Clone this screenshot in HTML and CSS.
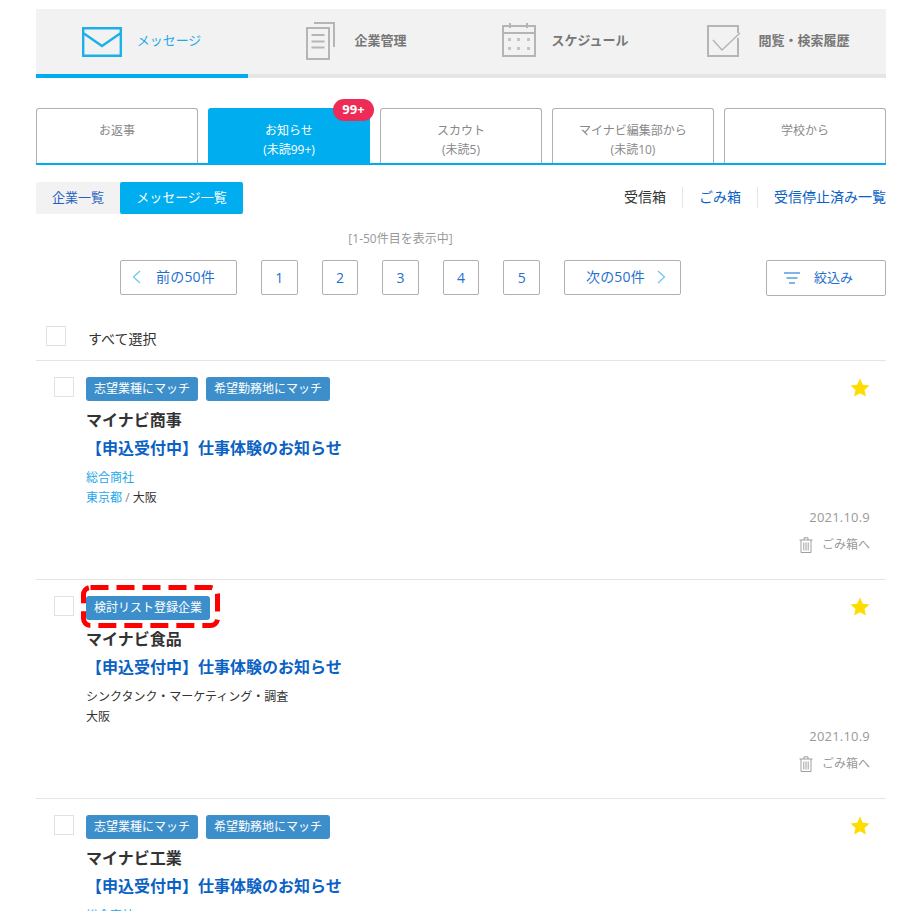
FILE: index.html
```html
<!DOCTYPE html>
<html lang="ja">
<head>
    <meta charset="UTF-8">
    <title>メッセージ</title>
    <link rel="stylesheet" href="styles.css">
</head>
<body>
<svg class="defs" width="0" height="0">
    <symbol id="star" viewBox="0 0 20 20"><path d="M10 .6l2.8 6.2 6.7.7-5 4.5 1.4 6.6L10 15.2l-5.9 3.4 1.4-6.6-5-4.5 6.7-.7z"/></symbol>
    <symbol id="trash" viewBox="0 0 14 16"><path d="M.5 3h13M5 3V.8h4V3M2 3v12.500h10V3M4.800 5.500v8M7 5.500v8M9.200 5.500v8" fill="none" stroke="#888" stroke-width=".8"/></symbol>
</svg>

<div class="wrap">
    <nav class="gnav">
        <a class="gnav-item active">
            <svg class="ico-mail" width="40" height="30" viewBox="0 0 40 30"><path d="M1.200 1.200h37.600v27.600H1.200zM1.200 6L20 19 38.800 6" fill="none" stroke="#1cb0ea" stroke-width="2.400"/></svg>
            <span>メッセージ</span>
        </a>
        <a class="gnav-item gnav-doc">
            <svg class="ico-doc" width="29" height="38" viewBox="0 0 29 38"><path d="M1 6h22v31H1z" fill="none" stroke="#b5b5b5" stroke-width="2"/><path d="M8 1h20v24M5.500 13h13M5.500 19.500h13M5.500 25.500h13" fill="none" stroke="#b5b5b5" stroke-width="2"/></svg>
            <span>企業管理</span>
        </a>
        <a class="gnav-item gnav-cal">
            <svg width="34" height="34" viewBox="0 0 34 34"><path d="M1 3h32v30H1zM1 10h32M8 0v5M25 0v5" fill="none" stroke="#b5b5b5" stroke-width="2"/><path d="M6 15h3v3H6zM15 15h3v3h-3zM25 15h3v3h-3zM6 24h3v3H6zM15 24h3v3h-3zM25 24h3v3h-3z" fill="#c4c4c4"/></svg>
            <span>スケジュール</span>
        </a>
        <a class="gnav-item gnav-last">
            <svg class="ico-check" width="34" height="32" viewBox="0 0 34 32"><path d="M31 8V1H1v30h30V13" fill="none" stroke="#b5b5b5" stroke-width="2"/><path d="M6 15l9 10L33 8" fill="none" stroke="#b5b5b5" stroke-width="1.500"/></svg>
            <span>閲覧・検索履歴</span>
        </a>
    </nav>

    <ul class="tabs">
        <li class="tab">お返事</li>
        <li class="tab current">お知らせ<br>(未読99+)<span class="badge">99+</span></li>
        <li class="tab">スカウト<br>(未読5)</li>
        <li class="tab">マイナビ編集部から<br>(未読10)</li>
        <li class="tab">学校から</li>
    </ul>

    <div class="subbar">
        <div class="switch">
            <a class="switch-off">企業一覧</a>
            <a class="switch-on">メッセージ一覧</a>
        </div>
        <ul class="boxes">
            <li class="box-now">受信箱</li>
            <li>ごみ箱</li>
            <li>受信停止済み一覧</li>
        </ul>
    </div>

    <div class="pagerow">
        <div class="pagewrap">
            <p class="count">[1-50件目を表示中]</p>
            <div class="pager">
                <a class="btn btn-wide btn-prev"><svg width="9" height="14" viewBox="0 0 9 14"><path d="M8 1L1.500 7 8 13" fill="none" stroke="#6cc6f2" stroke-width="1.200"/></svg><span>前の50件</span></a>
                <a class="btn btn-num">1</a>
                <a class="btn btn-num">2</a>
                <a class="btn btn-num">3</a>
                <a class="btn btn-num">4</a>
                <a class="btn btn-num">5</a>
                <a class="btn btn-wide btn-next"><span>次の50件</span><svg width="9" height="14" viewBox="0 0 9 14"><path d="M1 1l6.500 6L1 13" fill="none" stroke="#6cc6f2" stroke-width="1.200"/></svg></a>
            </div>
        </div>
        <a class="btn btn-filter"><svg width="16" height="12" viewBox="0 0 16 12"><path d="M0 1h16M2.500 6h11M5 11h6" fill="none" stroke="#7fb6ea" stroke-width="2"/></svg><span>絞込み</span></a>
    </div>

    <div class="selectall">
        <i class="check"></i>
        <span>すべて選択</span>
    </div>

    <section class="row">
        <div class="row-head">
            <i class="check"></i>
            <div class="row-body">
                <div class="tags"><span class="tag">志望業種にマッチ</span><span class="tag">希望勤務地にマッチ</span></div>
                <h2 class="name">マイナビ商事</h2>
                <a class="subject">【申込受付中】仕事体験のお知らせ</a>
                <p class="meta hit">総合商社</p>
                <p class="meta"><span class="hit">東京都</span> <span class="slash">/</span> 大阪</p>
            </div>
            <svg class="star"><use href="#star"/></svg>
        </div>
        <div class="row-foot">
            <p class="date">2021.10.9</p>
            <a class="del"><svg width="14" height="16"><use href="#trash"/></svg>ごみ箱へ</a>
        </div>
    </section>

    <section class="row">
        <div class="row-head">
            <i class="check"></i>
            <div class="row-body">
                <div class="tags marked">
                    <span class="tag">検討リスト登録企業</span>
                    <svg class="dashes" width="139" height="43"><rect x="2.500" y="2.500" width="134" height="38" rx="7" fill="none" stroke="#f00" stroke-width="5" stroke-dasharray="18 8"/></svg>
                </div>
                <h2 class="name">マイナビ食品</h2>
                <a class="subject">【申込受付中】仕事体験のお知らせ</a>
                <p class="meta">シンクタンク・マーケティング・調査</p>
                <p class="meta">大阪</p>
            </div>
            <svg class="star"><use href="#star"/></svg>
        </div>
        <div class="row-foot">
            <p class="date">2021.10.9</p>
            <a class="del"><svg width="14" height="16"><use href="#trash"/></svg>ごみ箱へ</a>
        </div>
    </section>

    <section class="row">
        <div class="row-head">
            <i class="check"></i>
            <div class="row-body">
                <div class="tags"><span class="tag">志望業種にマッチ</span><span class="tag">希望勤務地にマッチ</span></div>
                <h2 class="name">マイナビ工業</h2>
                <a class="subject">【申込受付中】仕事体験のお知らせ</a>
                <p class="meta hit">総合商社</p>
            </div>
            <svg class="star"><use href="#star"/></svg>
        </div>
    </section>
</div>
</body>
</html>
```

FILE: styles.css
```css
* {
    margin: 0;
    padding: 0;
    box-sizing: border-box;
}
ul { list-style: none; }
html, body {
    height: 911px;
    overflow: hidden;
}
body {
    background: #fff;
    font-family: "Open Sans", "Noto Sans CJK JP", sans-serif;
    font-size: 13px;
    color: #333;
}
.defs { position: absolute; }
.wrap {
    width: 850px;
    margin: 9px 0 0 36px;
}

/* top nav */
.gnav {
    display: flex;
    height: 69px;
    background: #f2f2f2;
}
.gnav-item {
    flex: 1;
    display: flex;
    align-items: center;
    justify-content: center;
    gap: 15px;
    padding-bottom: 4px;
    border-bottom: 4px solid #e5e5e5;
    font-size: 13px;
    font-weight: 700;
    color: #777;
}
.gnav-item.active {
    flex: 0 0 212px;
    gap: 15px;
    padding-right: 1px;
    border-bottom-color: #00adef;
    color: #1ea7ea;
    font-weight: 400;
}
.ico-mail { margin-top: 5px; }
.ico-doc {
    margin-top: 3px;
    margin-right: 4px;
}
.gnav-doc { padding-left: 4px; }
.gnav-cal { padding-right: 4px; }
.gnav-last { padding-right: 3px; }
.ico-check {
    margin-top: 3px;
    margin-right: 2px;
}

/* tabs */
.tabs {
    display: flex;
    gap: 10px;
    height: 57px;
    margin-top: 30px;
    border-bottom: 2px solid #00adef;
}
.tab {
    position: relative;
    flex: 1;
    padding-top: 12px;
    border: 1px solid #b0b0b0;
    border-bottom: none;
    border-radius: 3px 3px 0 0;
    font-size: 12px;
    line-height: 19px;
    text-align: center;
    color: #888;
}
.tab.current {
    background: #00adef;
    border-color: #00adef;
    color: #fff;
}
.badge {
    position: absolute;
    top: -10px;
    right: -5px;
    width: 41px;
    height: 22px;
    border-radius: 11px;
    background: #ee2a56;
    font-size: 13px;
    font-weight: 700;
    line-height: 21px;
    color: #fff;
}

/* switch + box links */
.subbar {
    display: flex;
    justify-content: space-between;
    height: 32px;
    margin-top: 17px;
}
.switch {
    display: flex;
    height: 32px;
    line-height: 30px;
    font-size: 13px;
    text-align: center;
}
.switch-off {
    width: 84px;
    background: #f2f2f2;
    border-radius: 2px 0 0 2px;
    color: #1f62bf;
}
.switch-on {
    width: 123px;
    background: #00adef;
    border-radius: 2px;
    color: #fff;
}
.boxes {
    display: flex;
    height: 21px;
    margin-top: 5px;
    font-size: 14px;
    line-height: 19px;
    color: #0b62c4;
}
.boxes li {
    padding: 0 0 0 16px;
    margin-left: 16px;
    border-left: 1px solid #e5e5e5;
}
.boxes li:first-child {
    border-left: none;
    padding: 0;
    margin: 0;
}
.boxes .box-now { color: #333; }

/* pager */
.pagerow {
    display: flex;
    align-items: flex-end;
    margin-top: 16px;
}
.pagewrap {
    flex: 1;
    padding: 0 1px 1px 0;
}
.count {
    font-size: 12px;
    line-height: 18px;
    text-align: center;
    color: #999;
}
.pager {
    display: flex;
    justify-content: center;
    gap: 24px;
    margin-top: 12px;
}
.btn {
    display: flex;
    align-items: center;
    height: 35px;
    padding-bottom: 1px;
    background: #fff;
    border: 1px solid #b0b0b0;
    border-radius: 2px;
    font-size: 14px;
    color: #1f6fd0;
}
.btn span { margin-bottom: 2px; }
.btn-wide {
    width: 117px;
    letter-spacing: .2px;
}
.btn-prev {
    padding-left: 11px;
    gap: 15px;
}
.btn-next {
    justify-content: flex-end;
    padding-right: 14px;
    gap: 12px;
}
.btn-num {
    width: 36.6px;
    justify-content: center;
}
.btn-filter {
    width: 120px;
    height: 36px;
    gap: 14px;
    padding-left: 17px;
    font-size: 13px;
}

/* select all */
.selectall {
    display: flex;
    align-items: center;
    gap: 22px;
    height: 64px;
    padding: 16px 0 0 10px;
    font-size: 14px;
}
.selectall span { margin-top: 3px; }
.check {
    display: block;
    flex: none;
    width: 20px;
    height: 20px;
    background: #fff;
    border: 1px solid #e2e2e2;
}

/* rows */
.row {
    height: 219px;
    padding: 16px 16px 0 18px;
    border-top: 1px solid #e5e5e5;
}
.row-head {
    display: flex;
    gap: 12px;
}
.row-body { flex: 1; }
.tags {
    display: flex;
    gap: 8px;
}
.marked { position: relative; }
.dashes {
    position: absolute;
    top: -11px;
    left: -5px;
}
.tag {
    height: 24px;
    padding: 0 8px;
    background: #3d8fcb;
    border-radius: 3px;
    font-size: 12px;
    line-height: 24px;
    color: #fff;
}
.name {
    margin-top: 7px;
    font-size: 16px;
    font-weight: 700;
    line-height: 24px;
    color: #333;
}
.subject {
    display: block;
    margin-top: 4px;
    font-size: 16px;
    font-weight: 700;
    line-height: 24px;
    color: #0b62c4;
}
.meta {
    font-size: 12px;
    line-height: 20px;
}
.subject + .meta { margin-top: 8px; }
.hit { color: #1ea7ea; }
.slash { color: #888; }
.star {
    flex: none;
    width: 20px;
    height: 20px;
    margin-top: 1px;
    fill: #ffdc00;
}
.row-foot {
    text-align: right;
    font-size: 12px;
    color: #999;
}
.date {
    font-size: 13px;
    letter-spacing: .2px;
    line-height: 18px;
}
.del {
    display: flex;
    justify-content: flex-end;
    align-items: center;
    gap: 9px;
    margin-top: 9px;
    line-height: 20px;
}
```
